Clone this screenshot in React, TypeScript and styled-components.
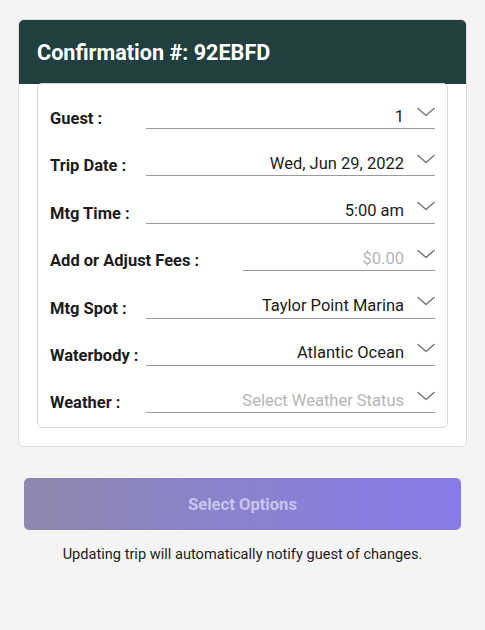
import React from 'react'
import styled, { createGlobalStyle } from 'styled-components'

type Field = {
  label: string
  value: string
  placeholder?: boolean
  narrow?: boolean
}

const fields: Field[] = [
  { label: 'Guest :', value: '1' },
  { label: 'Trip Date :', value: 'Wed, Jun 29, 2022' },
  { label: 'Mtg Time :', value: '5:00 am' },
  { label: 'Add or Adjust Fees :', value: '$0.00', placeholder: true, narrow: true },
  { label: 'Mtg Spot :', value: 'Taylor Point Marina' },
  { label: 'Waterbody :', value: 'Atlantic Ocean' },
  { label: 'Weather :', value: 'Select Weather Status', placeholder: true },
]

const Chevron = () => (
  <svg width="18" height="10" viewBox="0 0 18 10" fill="none">
    <path d="M1 1.5 L9 8.5 L17 1.5" stroke="#7a7a7a" strokeWidth="1.6" strokeLinecap="round" strokeLinejoin="round" />
  </svg>
)

const App = () => {
  return (
    <Page>
      <GlobalStyle />
      <Card>
        <Header>Confirmation #: 92EBFD</Header>
        <FormBox>
          {fields.map((f) => (
            <Row key={f.label}>
              <Label>{f.label}</Label>
              <Select $narrow={f.narrow}>
                <Value $placeholder={f.placeholder}>{f.value}</Value>
                <Arrow>
                  <Chevron />
                </Arrow>
              </Select>
            </Row>
          ))}
        </FormBox>
      </Card>
      <Actions>
        <SubmitButton disabled>Select Options</SubmitButton>
        <Note>Updating trip will automatically notify guest of changes.</Note>
      </Actions>
    </Page>
  )
}

export default App

const GlobalStyle = createGlobalStyle`
  html, body {
    margin: 0;
    background: #f4f4f4;
    font-family: Roboto, "Liberation Sans", sans-serif;
  }
`

const Page = styled.div`
  min-height: 630px;
  box-sizing: border-box;
  padding: 19px 18px 0;
`

const Card = styled.div`
  background: #fff;
  border: 1px solid #dcdcdc;
  border-radius: 6px;
  overflow: hidden;
  padding-bottom: 18px;
`

const Header = styled.div`
  background: #213f3f;
  color: #fff;
  font-size: 21.6px;
  font-weight: 700;
  height: 64px;
  box-sizing: border-box;
  padding: 20px 18px 0;
  line-height: 25px;
  margin-bottom: -1px;
`

const FormBox = styled.div`
  position: relative;
  margin: 0 18px;
  background: #fff;
  border: 1px solid #d8d8d8;
  border-radius: 5px;
  padding: 17px 12px 14px;
  display: flex;
  flex-direction: column;
  gap: 19.4px;
`

const Row = styled.div`
  display: flex;
  align-items: flex-end;
  height: 28px;
`

const Label = styled.div`
  min-width: 96px;
  font-size: 16.5px;
  font-weight: 700;
  color: #1c1c1c;
  line-height: 20px;
`

const Select = styled.div<{ $narrow?: boolean }>`
  display: flex;
  align-items: center;
  justify-content: flex-end;
  height: 28px;
  box-sizing: border-box;
  border-bottom: 1.5px solid #9a9a9a;
  ${(p) => (p.$narrow ? 'width: 192px; margin-left: auto;' : 'flex: 1;')}
`

const Value = styled.span<{ $placeholder?: boolean }>`
  font-size: 16.5px;
  line-height: 20px;
  color: ${(p) => (p.$placeholder ? '#b5b5b5' : '#1c1c1c')};
  margin-top: 4px;
`

const Arrow = styled.span`
  display: flex;
  margin: -6px 0 0 13px;
`

const Actions = styled.div`
  padding: 31px 6px 0;
  display: flex;
  flex-direction: column;
  align-items: stretch;
`

const SubmitButton = styled.button`
  height: 52px;
  border: none;
  border-radius: 5px;
  background: linear-gradient(90deg, #8e89ad 0%, #8a82cf 50%, #897ae9 100%);
  color: #cac5ee;
  font-family: Roboto, "Liberation Sans", sans-serif;
  font-size: 16.6px;
  font-weight: 700;
`

const Note = styled.p`
  margin: 15px 0 0;
  text-align: center;
  font-size: 14.6px;
  color: #1e1e1e;
`
